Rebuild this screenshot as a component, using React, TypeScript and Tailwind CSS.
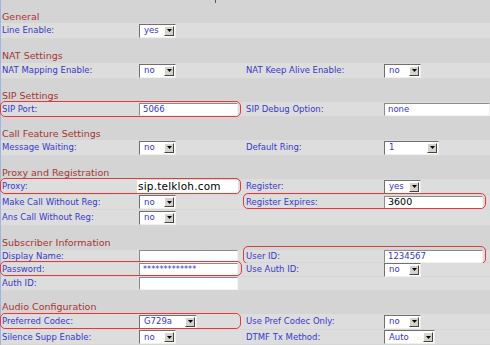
import React from "react";

type Val =
  | { kind: "select"; text: string; w: string }
  | { kind: "input"; text: string; w: string; tone?: "blue" | "proxy" | "num" | "stars" };

type Half = { label?: string; value?: Val; hl?: string };

type Row =
  | { type: "blank"; h: string; mark?: boolean }
  | { type: "heading"; h: string; text: string }
  | { type: "data"; h: string; left: Half; right: Half };

const rows: Row[] = [
  { type: "blank", h: "h-[10px]", mark: true },
  { type: "heading", h: "h-[13px]", text: "General" },
  { type: "data", h: "h-[16px]", left: { label: "Line Enable:", value: { kind: "select", text: "yes", w: "w-[37px]" } }, right: {} },
  { type: "blank", h: "h-[10px]" },
  { type: "heading", h: "h-[14px]", text: "NAT Settings" },
  {
    type: "data",
    h: "h-[16px]",
    left: { label: "NAT Mapping Enable:", value: { kind: "select", text: "no", w: "w-[37px]" } },
    right: { label: "NAT Keep Alive Enable:", value: { kind: "select", text: "no", w: "w-[37px]" } },
  },
  { type: "blank", h: "h-[10px]" },
  { type: "heading", h: "h-[13px]", text: "SIP Settings" },
  {
    type: "data",
    h: "h-[15px]",
    left: { label: "SIP Port:", value: { kind: "input", text: "5066", w: "w-[99px]" }, hl: "left-0 w-[241px] -top-[1px] -bottom-[1px]" },
    right: { label: "SIP Debug Option:", value: { kind: "input", text: "none", w: "w-[106px]" } },
  },
  { type: "blank", h: "h-[10px]" },
  { type: "heading", h: "h-[13px]", text: "Call Feature Settings" },
  {
    type: "data",
    h: "h-[16px]",
    left: { label: "Message Waiting:", value: { kind: "select", text: "no", w: "w-[37px]" } },
    right: { label: "Default Ring:", value: { kind: "select", text: "1", w: "w-[55px]" } },
  },
  { type: "blank", h: "h-[10px]" },
  { type: "heading", h: "h-[13px]", text: "Proxy and Registration" },
  {
    type: "data",
    h: "h-[16px]",
    left: { label: "Proxy:", value: { kind: "input", text: "sip.telkloh.com", w: "w-[101px]", tone: "proxy" }, hl: "left-0 w-[241px] -top-[1px] bottom-0" },
    right: { label: "Register:", value: { kind: "select", text: "yes", w: "w-[37px]" } },
  },
  {
    type: "data",
    h: "h-[15px]",
    left: { label: "Make Call Without Reg:", value: { kind: "select", text: "no", w: "w-[37px]" } },
    right: { label: "Register Expires:", value: { kind: "input", text: "3600", w: "w-[99px]", tone: "num" }, hl: "left-[243px] w-[243px] -top-[2px] bottom-0" },
  },
  {
    type: "data",
    h: "h-[16px]",
    left: { label: "Ans Call Without Reg:", value: { kind: "select", text: "no", w: "w-[37px]" } },
    right: {},
  },
  { type: "blank", h: "h-[10px]" },
  { type: "heading", h: "h-[14px]", text: "Subscriber Information" },
  {
    type: "data",
    h: "h-[13px]",
    left: { label: "Display Name:", value: { kind: "input", text: "", w: "w-[99px]" } },
    right: { label: "User ID:", value: { kind: "input", text: "1234567", w: "w-[99px]" }, hl: "left-[243px] w-[243px] -top-[4px] -bottom-[2px]" },
  },
  {
    type: "data",
    h: "h-[14px]",
    left: { label: "Password:", value: { kind: "input", text: "*************", w: "w-[99px]", tone: "stars" }, hl: "left-0 w-[242px] -top-[2px] bottom-0" },
    right: { label: "Use Auth ID:", value: { kind: "select", text: "no", w: "w-[37px]" } },
  },
  {
    type: "data",
    h: "h-[14px]",
    left: { label: "Auth ID:", value: { kind: "input", text: "", w: "w-[99px]" } },
    right: {},
  },
  { type: "blank", h: "h-[9px]" },
  { type: "heading", h: "h-[14px]", text: "Audio Configuration" },
  {
    type: "data",
    h: "h-[16px]",
    left: { label: "Preferred Codec:", value: { kind: "select", text: "G729a", w: "w-[58px]" }, hl: "left-0 w-[241px] -top-[1px] bottom-0" },
    right: { label: "Use Pref Codec Only:", value: { kind: "select", text: "no", w: "w-[37px]" } },
  },
  {
    type: "data",
    h: "h-[15px]",
    left: { label: "Silence Supp Enable:", value: { kind: "select", text: "no", w: "w-[37px]" } },
    right: { label: "DTMF Tx Method:", value: { kind: "select", text: "Auto", w: "w-[51px]" } },
  },
];

const labelFont = { fontFamily: '"DejaVu Sans", Verdana, sans-serif' };

function Select({ text, w }: { text: string; w: string }) {
  return (
    <div
      className={`relative h-[14px] ${w} bg-white border border-t-[#6f6f6f] border-l-[#6f6f6f] border-b-[#efefef] border-r-[#efefef] flex items-center`}
    >
      <span className="pl-[4px] text-[8.5px] leading-none text-[#3535c8]" style={labelFont}>
        {text}
      </span>
      <div className="absolute right-[1px] top-[1px] w-[10px] h-[10px] bg-[#d6d3cc] border border-t-[#ffffff] border-l-[#ffffff] border-b-[#444444] border-r-[#444444] flex items-center justify-center">
        <svg width="5" height="3" viewBox="0 0 5 3">
          <path d="M0 0 H5 L2.5 3 Z" fill="#000" />
        </svg>
      </div>
    </div>
  );
}

function Input({ v }: { v: Extract<Val, { kind: "input" }> }) {
  let textCls = "pl-[3px] text-[8.5px] text-[#3535c8]";
  if (v.tone === "proxy") textCls = "pl-[1px] text-[10.5px] text-black tracking-[0.2px]";
  if (v.tone === "num") textCls = "pl-[3px] text-[9.5px] text-black";
  if (v.tone === "stars") textCls = "pl-[3px] text-[8px] text-[#3535c8] tracking-[0.1px]";
  const border =
    v.tone === "proxy"
      ? "border-0"
      : "border border-t-[#8a8a8a] border-l-[#8a8a8a] border-b-[#f2f2f2] border-r-[#f2f2f2]";
  return (
    <div className={`h-[13px] ${v.w} bg-white ${border} flex items-center overflow-hidden ${v.tone === "proxy" ? "-ml-[2px]" : ""}`}>
      <span className={`${textCls} leading-none whitespace-nowrap`} style={labelFont}>
        {v.text}
      </span>
    </div>
  );
}

function Value({ v }: { v?: Val }) {
  if (!v) return null;
  if (v.kind === "select") return <Select text={v.text} w={v.w} />;
  return <Input v={v} />;
}

function HalfCells({ half, labelW, valueW }: { half: Half; labelW: string; valueW: string }) {
  return (
    <>
      <div className={`${labelW} h-full flex items-center pl-[1px]`}>
        {half.label && (
          <span className="text-[8.5px] leading-none text-[#3838cc] whitespace-nowrap" style={labelFont}>
            {half.label}
          </span>
        )}
      </div>
      <div className={`${valueW} h-full flex items-center`}>
        <Value v={half.value} />
      </div>
    </>
  );
}

export default function App() {
  return (
    <div className="w-[490px] h-[345px] flex bg-[#d4d4d4] overflow-hidden">
      <div className="w-[1px] h-full bg-[#9db6e4]" />
      <div className="flex-1 flex flex-col">
        {rows.map((r, i) => {
          if (r.type === "blank")
            return (
              <div key={i} className={`${r.h} relative bg-[#d4d4d4]`}>
                {r.mark && <div className="absolute left-[214px] top-0 w-[1px] h-[3px] bg-[#555555]" />}
              </div>
            );
          if (r.type === "heading")
            return (
              <div key={i} className={`${r.h} flex items-center pl-[1px] bg-[#d4d4d4]`}>
                <span className="text-[9.5px] leading-none text-[#a53535]" style={labelFont}>
                  {r.text}
                </span>
              </div>
            );
          return (
            <div key={i} className={`${r.h} relative flex bg-[#dddddd] border-b border-[#d6d6d6]`}>
              <HalfCells half={r.left} labelW="w-[138px]" valueW="w-[106px]" />
              <HalfCells half={r.right} labelW="w-[139px]" valueW="w-[106px]" />
              {r.left.hl && (
                <div className={`absolute ${r.left.hl} -translate-x-[1px] border border-[#e23a3a] rounded-[5px] pointer-events-none`} />
              )}
              {r.right.hl && (
                <div className={`absolute ${r.right.hl} -translate-x-[1px] border border-[#e23a3a] rounded-[5px] pointer-events-none`} />
              )}
            </div>
          );
        })}
      </div>
    </div>
  );
}
